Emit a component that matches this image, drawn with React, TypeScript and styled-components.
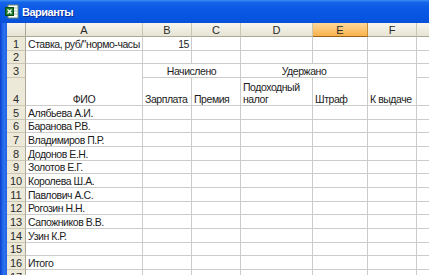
import React from "react";
import styled, { createGlobalStyle } from "styled-components";

const GlobalStyle = createGlobalStyle`
  html, body {
    margin: 0;
    padding: 0;
    background: #ffffff;
  }
  body {
    font-family: "Liberation Sans", Arial, sans-serif;
  }
`;

const Window = styled.div`
  width: 429px;
  height: 275px;
  display: flex;
  flex-direction: column;
  overflow: hidden;
`;

const TitleBar = styled.div`
  height: 23px;
  flex: none;
  display: flex;
  align-items: center;
  gap: 3px;
  padding-left: 5px;
  box-sizing: border-box;
  background: linear-gradient(
    to bottom,
    #3c8cf5 0%,
    #1664ea 10%,
    #0a58e4 40%,
    #0655e2 75%,
    #0a4fd6 100%
  );
`;

const Title = styled.span`
  color: #ffffff;
  font-family: "Liberation Sans", Arial, sans-serif;
  font-weight: bold;
  font-size: 11px;
  letter-spacing: -0.5px;
  text-shadow: 1px 1px 0 #0a2f9c;
`;

const Body = styled.div`
  flex: 1;
  display: flex;
  min-height: 0;
`;

const Frame = styled.div`
  width: 7px;
  flex: none;
  background: linear-gradient(
    to right,
    #0b3ccc 0%,
    #1a5ee6 30%,
    #2f74ee 60%,
    #1d5fe2 100%
  );
`;

const Sheet = styled.div`
  flex: 1;
  display: grid;
  grid-template-columns: 19px 117px 49px 49px 72px 55px 49px 60px;
  grid-template-rows: 14px repeat(3, 13.67px) 28px repeat(13, 13.67px);
  overflow: hidden;
  background: #ffffff;
`;

const Corner = styled.div`
  grid-column: 1;
  grid-row: 1;
  background: linear-gradient(to bottom, #f6f5ee, #e6e3d3);
  border-right: 1px solid #aca899;
  border-bottom: 1px solid #aca899;
`;

const ColHeader = styled.div<{ $col: number; $active?: boolean }>`
  grid-column: ${(p) => p.$col};
  grid-row: 1;
  box-sizing: border-box;
  display: flex;
  align-items: center;
  justify-content: center;
  font-size: 11px;
  color: #2a2a2a;
  background: ${(p) =>
    p.$active
      ? "linear-gradient(to bottom, #ffd89a, #f8b24c)"
      : "linear-gradient(to bottom, #f7f6ef, #e7e4d4)"};
  border-right: 1px solid ${(p) => (p.$active ? "#c88a2e" : "#cbc7b5")};
  border-bottom: 1px solid ${(p) => (p.$active ? "#9a6418" : "#aca899")};
`;

const RowHeader = styled.div<{ $row: number }>`
  grid-column: 1;
  grid-row: ${(p) => p.$row};
  box-sizing: border-box;
  display: flex;
  align-items: flex-end;
  justify-content: center;
  font-size: 11px;
  line-height: 12px;
  color: #2a2a2a;
  background: #ece9d8;
  border-right: 1px solid #aca899;
  border-bottom: 1px solid #cbc7b5;
`;

const Cell = styled.div<{
  $col: number;
  $row: number;
  $colSpan?: number;
  $rowSpan?: number;
  $align?: "left" | "center" | "right";
}>`
  grid-column: ${(p) => `${p.$col} / span ${p.$colSpan ?? 1}`};
  grid-row: ${(p) => `${p.$row} / span ${p.$rowSpan ?? 1}`};
  box-sizing: border-box;
  display: flex;
  flex-direction: column;
  justify-content: flex-end;
  align-items: ${(p) =>
    p.$align === "center" ? "center" : p.$align === "right" ? "flex-end" : "flex-start"};
  text-align: ${(p) => p.$align ?? "left"};
  padding: 0 2px;
  font-size: 10.5px;
  letter-spacing: -0.45px;
  line-height: 12px;
  color: #1c1c1c;
  white-space: nowrap;
  overflow: hidden;
  border-right: 1px solid #cccccc;
  border-bottom: 1px solid #cccccc;
`;

const ExcelIcon = () => (
  <svg width="14" height="15" viewBox="0 0 14 15">
    <rect x="3" y="1" width="10" height="13" fill="#ffffff" stroke="#6a8a6a" />
    <line x1="5" y1="4" x2="12" y2="4" stroke="#9bbf9b" />
    <line x1="5" y1="7" x2="12" y2="7" stroke="#9bbf9b" />
    <line x1="5" y1="10" x2="12" y2="10" stroke="#9bbf9b" />
    <rect x="0.5" y="3.5" width="8" height="8" fill="#1f7a2e" stroke="#0d4d17" />
    <path d="M2.5 5.5 L6.5 9.5 M6.5 5.5 L2.5 9.5" stroke="#ffffff" strokeWidth="1.4" />
  </svg>
);

type Entry = {
  col: number;
  row: number;
  text?: string;
  colSpan?: number;
  rowSpan?: number;
  align?: "left" | "center" | "right";
};

// col 1 = A ... col 7 = G; row numbers as in the sheet
const entries: Entry[] = [
  { col: 1, row: 1, text: "Ставка, руб/\"нормо-часы" },
  { col: 2, row: 1, text: "15", align: "right" },
  { col: 1, row: 3, rowSpan: 2, text: "ФИО", align: "center" },
  { col: 2, row: 3, colSpan: 2, text: "Начислено", align: "center" },
  { col: 4, row: 3, colSpan: 2, text: "Удержано", align: "center" },
  { col: 6, row: 3, rowSpan: 2, text: "К выдаче" },
  { col: 2, row: 4, text: "Зарплата" },
  { col: 3, row: 4, text: "Премия" },
  { col: 4, row: 4, text: "Подоходный\nналог" },
  { col: 5, row: 4, text: "Штраф" },
  { col: 1, row: 5, text: "Алябьева А.И." },
  { col: 1, row: 6, text: "Баранова Р.В." },
  { col: 1, row: 7, text: "Владимиров П.Р." },
  { col: 1, row: 8, text: "Додонов Е.Н." },
  { col: 1, row: 9, text: "Золотов Е.Г." },
  { col: 1, row: 10, text: "Королева Ш.А." },
  { col: 1, row: 11, text: "Павлович А.С." },
  { col: 1, row: 12, text: "Рогозин Н.Н." },
  { col: 1, row: 13, text: "Сапожников В.В." },
  { col: 1, row: 14, text: "Узин К.Р." },
  { col: 1, row: 16, text: "Итого" },
];

const letters = ["A", "B", "C", "D", "E", "F", "G"];
const rowCount = 17;

function buildCells(): Entry[] {
  const covered = new Set<string>();
  const byKey = new Map<string, Entry>();
  for (const e of entries) {
    byKey.set(`${e.col}:${e.row}`, e);
    for (let c = 0; c < (e.colSpan ?? 1); c++) {
      for (let r = 0; r < (e.rowSpan ?? 1); r++) {
        if (c || r) covered.add(`${e.col + c}:${e.row + r}`);
      }
    }
  }
  const out: Entry[] = [];
  for (let r = 1; r <= rowCount; r++) {
    for (let c = 1; c <= letters.length; c++) {
      const key = `${c}:${r}`;
      if (covered.has(key)) continue;
      out.push(byKey.get(key) ?? { col: c, row: r });
    }
  }
  return out;
}

export default function App() {
  const cells = buildCells();
  return (
    <>
      <GlobalStyle />
      <Window>
        <TitleBar>
          <ExcelIcon />
          <Title>Варианты</Title>
        </TitleBar>
        <Body>
          <Frame />
          <Sheet>
            <Corner />
            {letters.map((l, i) => (
              <ColHeader key={l} $col={i + 2} $active={l === "E"}>
                {l === "G" ? "" : l}
              </ColHeader>
            ))}
            {Array.from({ length: rowCount }, (_, i) => (
              <RowHeader key={i} $row={i + 2}>
                {i + 1}
              </RowHeader>
            ))}
            {cells.map((c) => (
              <Cell
                key={`${c.col}-${c.row}`}
                $col={c.col + 1}
                $row={c.row + 1}
                $colSpan={c.colSpan}
                $rowSpan={c.rowSpan}
                $align={c.align}
              >
                {c.text?.split("\n").map((line, i) => (
                  <span key={i}>{line}</span>
                ))}
              </Cell>
            ))}
          </Sheet>
        </Body>
      </Window>
    </>
  );
}
